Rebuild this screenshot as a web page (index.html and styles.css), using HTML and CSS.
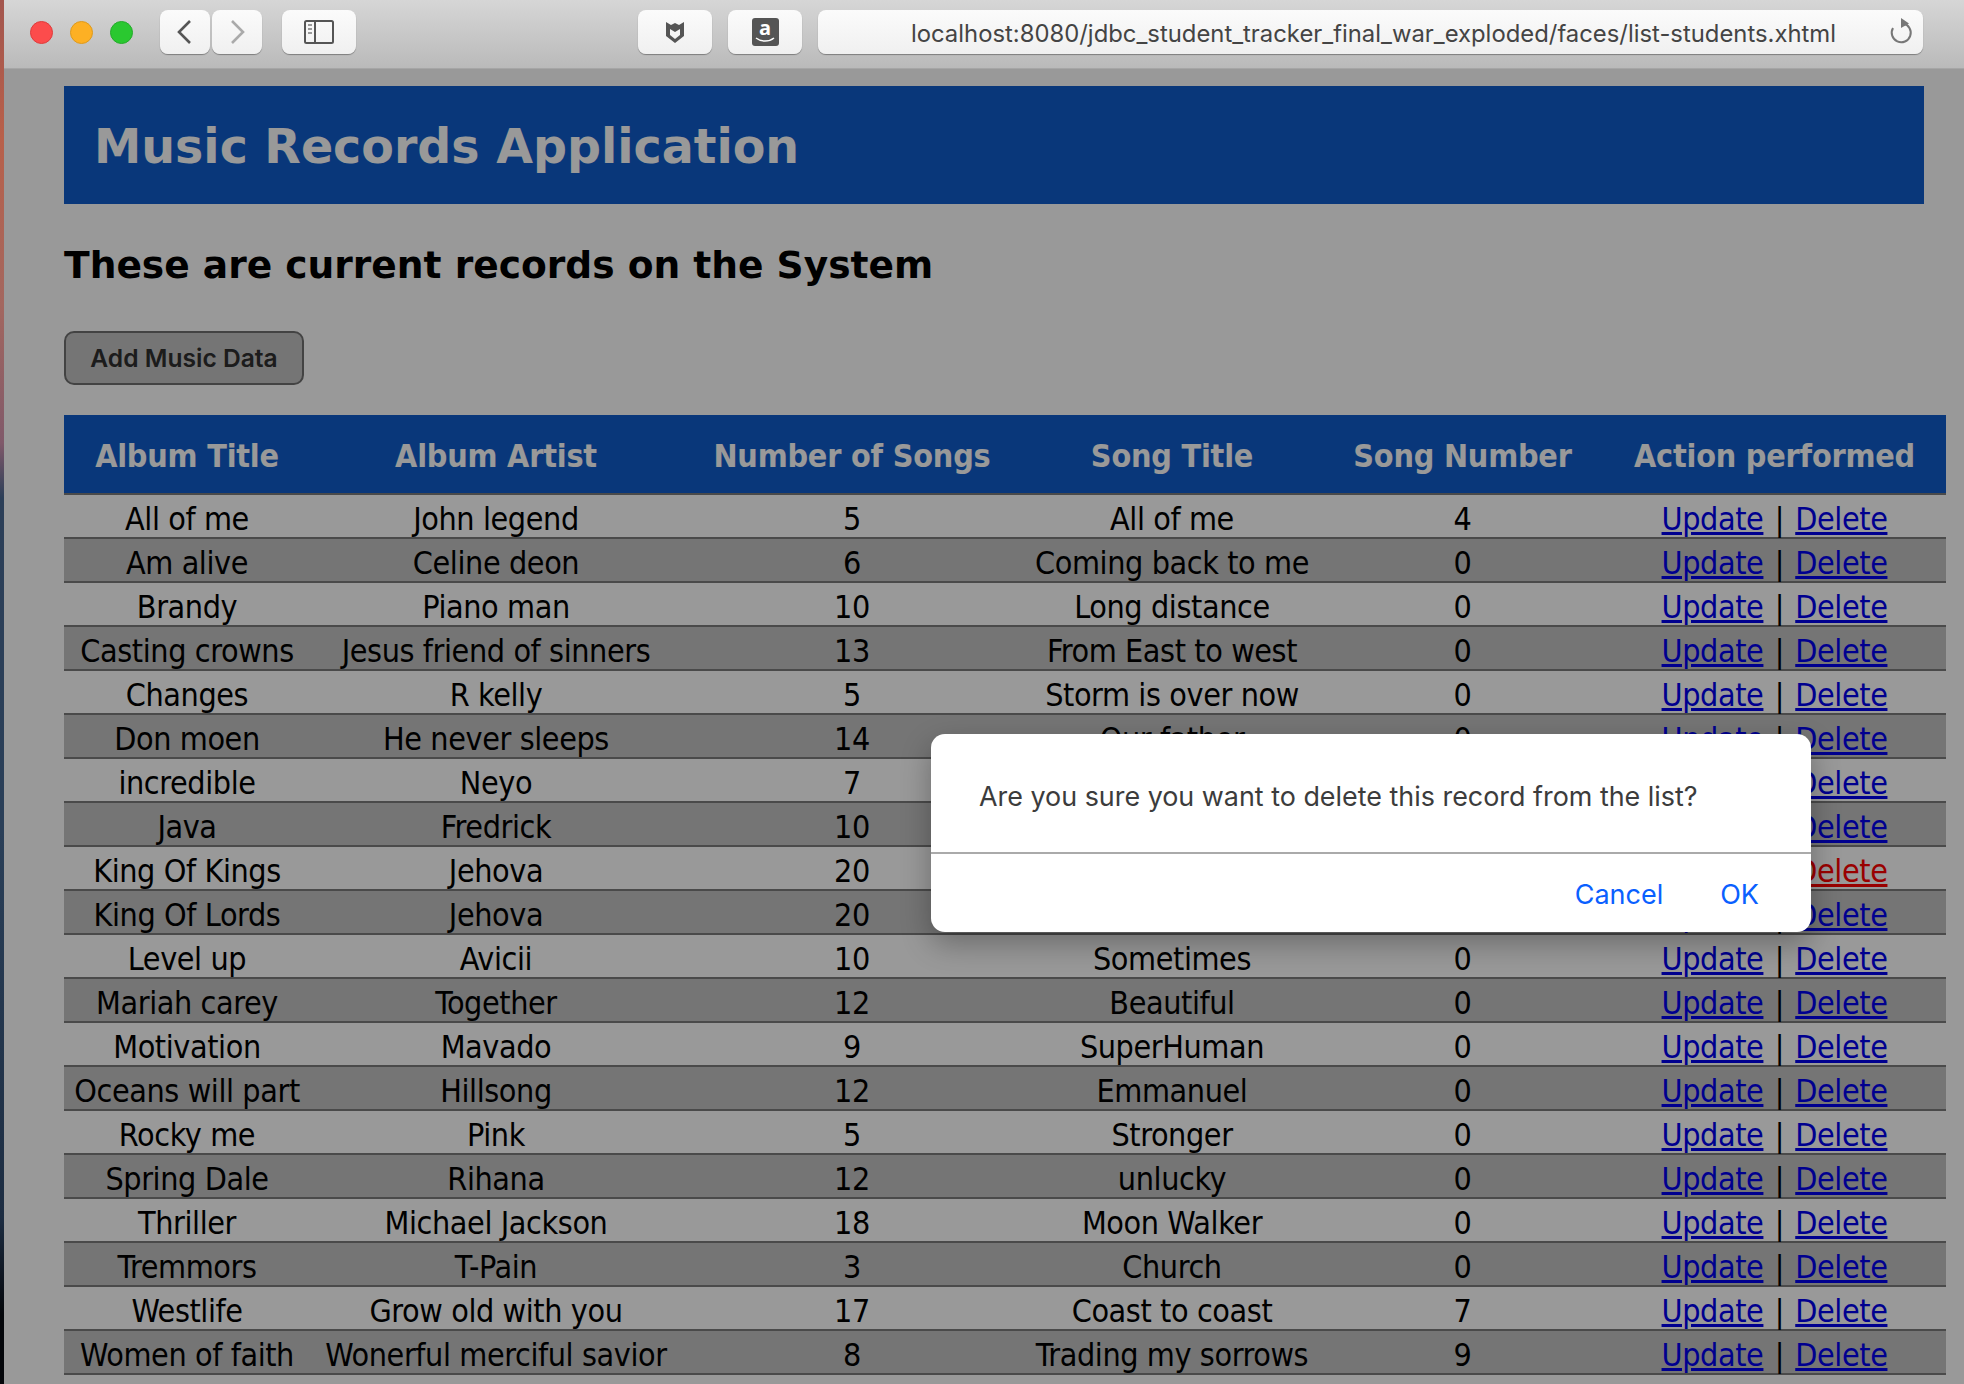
FILE: index.html
```html
<!DOCTYPE html>
<html>
<head>
    <title>Music Records Application</title>
    <link rel="stylesheet" href="styles.css">
</head>
<body>
    <div class="wallpaper"></div>
    <div class="window">
        <div class="toolbar">
            <div class="lights">
                <span class="light red"></span>
                <span class="light amber"></span>
                <span class="light green"></span>
            </div>
            <div class="nav-group">
                <div class="tool nav-btn">
                    <svg width="20" height="26" viewBox="0 0 20 26"><path d="M15 2 4 13l11 11" fill="none" stroke="#555" stroke-width="2.6"/></svg>
                </div>
                <div class="tool nav-btn">
                    <svg width="20" height="26" viewBox="0 0 20 26"><path d="M5 2l11 11L5 24" fill="none" stroke="#aaa" stroke-width="2.6"/></svg>
                </div>
            </div>
            <div class="tool sidebar-btn">
                <svg width="30" height="24" viewBox="0 0 30 24">
                    <rect x="1" y="1" width="28" height="22" rx="1.5" fill="none" stroke="#555" stroke-width="2"/>
                    <path d="M11 1v22" stroke="#555" stroke-width="2"/>
                    <path d="M4 5h4M4 9h4M4 13h4" stroke="#999" stroke-width="2"/>
                </svg>
            </div>
            <div class="tool ext-btn shield-btn">
                <svg width="20" height="24" viewBox="0 0 20 24"><path fill-rule="evenodd" fill="#555" d="M1 2l5 3 4-2 4 2 5-3v14l-9 7-9-7zM5 9v6l5 4 5-4V9l-5 3z"/></svg>
            </div>
            <div class="tool ext-btn">
                <div class="amazon">
                    <span>a</span>
                    <svg width="20" height="6" viewBox="0 0 20 6"><path d="M1 1c5 4 13 4 18 0" fill="none" stroke="#fff" stroke-width="1.5"/></svg>
                </div>
            </div>
            <div class="tool url-bar">
                <span class="url">localhost:8080/jdbc_student_tracker_final_war_exploded/faces/list-students.xhtml</span>
                <svg class="reload" width="24" height="28" viewBox="0 0 24 28">
                    <path d="M14.5 6.5A9.5 9.5 0 1 1 4 11" fill="none" stroke="#777" stroke-width="2"/>
                    <path d="M12 1l8 5.500-8 4.500z" fill="#777"/>
                </svg>
            </div>
        </div>

        <div class="page">
            <div class="banner"><h1>Music Records Application</h1></div>
            <h2>These are current records on the System</h2>
            <button class="add-btn">Add Music Data</button>

            <table class="records">
                <colgroup>
                    <col class="col-title">
                    <col class="col-artist">
                    <col class="col-count">
                    <col class="col-song">
                    <col class="col-number">
                    <col class="col-action">
                </colgroup>
                <thead>
                    <tr><th>Album Title</th><th>Album Artist</th><th>Number of Songs</th><th>Song Title</th><th>Song Number</th><th>Action performed</th></tr>
                </thead>
                <tbody>
                    <tr><td>All of me</td><td>John legend</td><td>5</td><td>All of me</td><td>4</td><td><a href="#">Update</a> | <a href="#">Delete</a></td></tr>
                    <tr><td>Am alive</td><td>Celine deon</td><td>6</td><td>Coming back to me</td><td>0</td><td><a href="#">Update</a> | <a href="#">Delete</a></td></tr>
                    <tr><td>Brandy</td><td>Piano man</td><td>10</td><td>Long distance</td><td>0</td><td><a href="#">Update</a> | <a href="#">Delete</a></td></tr>
                    <tr><td>Casting crowns</td><td>Jesus friend of sinners</td><td>13</td><td>From East to west</td><td>0</td><td><a href="#">Update</a> | <a href="#">Delete</a></td></tr>
                    <tr><td>Changes</td><td>R kelly</td><td>5</td><td>Storm is over now</td><td>0</td><td><a href="#">Update</a> | <a href="#">Delete</a></td></tr>
                    <tr><td>Don moen</td><td>He never sleeps</td><td>14</td><td>Our father</td><td>0</td><td><a href="#">Update</a> | <a href="#">Delete</a></td></tr>
                    <tr><td>incredible</td><td>Neyo</td><td>7</td><td></td><td></td><td><a href="#">Update</a> | <a href="#">Delete</a></td></tr>
                    <tr><td>Java</td><td>Fredrick</td><td>10</td><td></td><td></td><td><a href="#">Update</a> | <a href="#">Delete</a></td></tr>
                    <tr><td>King Of Kings</td><td>Jehova</td><td>20</td><td></td><td></td><td><a href="#">Update</a> | <a class="hovered" href="#">Delete</a></td></tr>
                    <tr><td>King Of Lords</td><td>Jehova</td><td>20</td><td></td><td></td><td><a href="#">Update</a> | <a href="#">Delete</a></td></tr>
                    <tr><td>Level up</td><td>Avicii</td><td>10</td><td>Sometimes</td><td>0</td><td><a href="#">Update</a> | <a href="#">Delete</a></td></tr>
                    <tr><td>Mariah carey</td><td>Together</td><td>12</td><td>Beautiful</td><td>0</td><td><a href="#">Update</a> | <a href="#">Delete</a></td></tr>
                    <tr><td>Motivation</td><td>Mavado</td><td>9</td><td>SuperHuman</td><td>0</td><td><a href="#">Update</a> | <a href="#">Delete</a></td></tr>
                    <tr><td>Oceans will part</td><td>Hillsong</td><td>12</td><td>Emmanuel</td><td>0</td><td><a href="#">Update</a> | <a href="#">Delete</a></td></tr>
                    <tr><td>Rocky me</td><td>Pink</td><td>5</td><td>Stronger</td><td>0</td><td><a href="#">Update</a> | <a href="#">Delete</a></td></tr>
                    <tr><td>Spring Dale</td><td>Rihana</td><td>12</td><td>unlucky</td><td>0</td><td><a href="#">Update</a> | <a href="#">Delete</a></td></tr>
                    <tr><td>Thriller</td><td>Michael Jackson</td><td>18</td><td>Moon Walker</td><td>0</td><td><a href="#">Update</a> | <a href="#">Delete</a></td></tr>
                    <tr><td>Tremmors</td><td>T-Pain</td><td>3</td><td>Church</td><td>0</td><td><a href="#">Update</a> | <a href="#">Delete</a></td></tr>
                    <tr><td>Westlife</td><td>Grow old with you</td><td>17</td><td>Coast to coast</td><td>7</td><td><a href="#">Update</a> | <a href="#">Delete</a></td></tr>
                    <tr><td>Women of faith</td><td>Wonerful merciful savior</td><td>8</td><td>Trading my sorrows</td><td>9</td><td><a href="#">Update</a> | <a href="#">Delete</a></td></tr>
                </tbody>
            </table>

            <div class="overlay"></div>
            <div class="dialog">
                <p class="dialog-msg">Are you sure you want to delete this record from the list?</p>
                <div class="dialog-actions">
                    <span class="dialog-btn">Cancel</span>
                    <span class="dialog-btn">OK</span>
                </div>
            </div>
        </div>
    </div>
</body>
</html>
```

FILE: styles.css
```css
html, body {
    height: 100%;
}
body {
    margin: 0;
    display: flex;
    overflow: hidden;
    font-family: "DejaVu Sans Condensed", "DejaVu Sans", sans-serif;
}
.wallpaper {
    width: 4px;
    flex-shrink: 0;
    background: linear-gradient(#a3564e 0%, #b8604a 10%, #a3675f 22%, #80596a 32%, #2c3f58 36%, #2a3f58 60%, #1d2d42 88%, #05070b 95%);
}
.window {
    flex: 1;
    min-width: 0;
    display: flex;
    flex-direction: column;
}

/* browser toolbar */
.toolbar {
    height: 69px;
    box-sizing: border-box;
    flex-shrink: 0;
    display: flex;
    align-items: center;
    padding: 0 0 4px 26px;
    background: linear-gradient(#d6d6d6, #bababa);
    border-bottom: 1px solid #a6a6a6;
}
.lights {
    display: flex;
    gap: 17px;
    margin-right: 27px;
}
.light {
    width: 23px;
    height: 23px;
    border-radius: 50%;
    box-sizing: border-box;
}
.red {
    background: #fc4c4c;
    border: 1px solid #df3b3b;
}
.amber {
    background: #fdb024;
    border: 1px solid #de9a1c;
}
.green {
    background: #2ac830;
    border: 1px solid #24ab2a;
}
.tool {
    height: 44px;
    display: flex;
    align-items: center;
    justify-content: center;
    background: linear-gradient(#fbfbfb, #f0f0f0);
    border-radius: 8px;
    box-shadow: 0 1px 1px rgba(0, 0, 0, 0.35);
}
.nav-group {
    display: flex;
    gap: 2px;
}
.nav-btn {
    width: 50px;
}
.sidebar-btn {
    width: 74px;
    margin-left: 20px;
}
.ext-btn {
    width: 74px;
    margin-left: 16px;
}
.shield-btn {
    margin-left: 282px;
}
.amazon {
    width: 27px;
    height: 28px;
    background: #555;
    border-radius: 3px;
    display: flex;
    flex-direction: column;
    align-items: center;
    color: #fff;
    font: 700 20px/19px "Open Sans", sans-serif;
}
.amazon svg {
    display: block;
}
.url-bar {
    width: 1105px;
    margin-left: 16px;
    position: relative;
}
.url {
    font-family: Inter, sans-serif;
    font-size: 23.85px;
    color: #444;
    white-space: nowrap;
    margin: 2px 0 0 6px;
}
.reload {
    position: absolute;
    right: 10px;
    top: 7px;
}

/* page */
.page {
    flex: 1;
    min-height: 0;
    position: relative;
    overflow: hidden;
    padding: 17px 0 0 60px;
    background: #fff;
}
.banner {
    width: 1860px;
    height: 118px;
    display: flex;
    align-items: center;
    padding: 2px 0 0 30px;
    box-sizing: border-box;
    background: #0f5ccb;
}
h1 {
    margin: 0;
    font-family: "DejaVu Sans", sans-serif;
    font-size: 47.5px;
    font-weight: bold;
    color: #fff;
}
h2 {
    margin: 38px 0 0;
    height: 47px;
    line-height: 47px;
    font-family: "DejaVu Sans", sans-serif;
    font-size: 37.6px;
    font-weight: bold;
    color: #000;
}
.add-btn {
    display: block;
    width: 240px;
    height: 54px;
    margin: 42px 0 0;
    padding: 0;
    background: #c3c3c3;
    border: 2px solid #717171;
    border-radius: 10px;
    font-family: Inter, sans-serif;
    font-size: 24.6px;
    font-weight: 600;
    color: #2f2f2f;
}

/* records table */
.records {
    width: 1882px;
    margin-top: 30px;
    table-layout: fixed;
    border-collapse: collapse;
    font-size: 32px;
    letter-spacing: -0.4px;
    color: #000;
}
.col-title { width: 246px; }
.col-artist { width: 372px; }
.col-count { width: 340px; }
.col-song { width: 300px; }
.col-number { width: 281px; }
.col-action { width: 343px; }
.records th {
    height: 74px;
    padding: 4px 0 0;
    background: #0f5ccb;
    color: #fff;
    font-size: 32px;
    font-weight: bold;
    letter-spacing: -0.2px;
    border-bottom: 2px solid #7c7c7c;
}
.records td {
    height: 36px;
    padding: 6px 0 0;
    text-align: center;
    white-space: nowrap;
    line-height: 36px;
    border-bottom: 2px solid #7c7c7c;
}
.records td:last-child {
    word-spacing: 2.5px;
}
.records tbody tr:nth-child(even) {
    background: #c3c3c3;
}
.records a {
    color: #0000ee;
}
.records a.hovered {
    color: #ff0000;
}

/* delete confirmation */
.overlay {
    position: absolute;
    inset: 0;
    background: rgba(0, 0, 0, 0.4);
}
.dialog {
    position: absolute;
    left: 927px;
    top: 665px;
    width: 880px;
    height: 198px;
    display: flex;
    flex-direction: column;
    background: #fff;
    border-radius: 14px;
    box-shadow: 0 12px 30px rgba(0, 0, 0, 0.3);
    font-family: Inter, sans-serif;
}
.dialog-msg {
    height: 118px;
    margin: 0;
    padding: 0 0 0 48px;
    line-height: 124px;
    font-size: 26.9px;
    color: #3c3c3c;
    border-bottom: 2px solid #aaa;
}
.dialog-actions {
    flex: 1;
    display: flex;
    justify-content: flex-end;
    align-items: center;
    gap: 57px;
    padding: 3px 52px 0 0;
    font-size: 27px;
    color: #0a60ff;
}
```
